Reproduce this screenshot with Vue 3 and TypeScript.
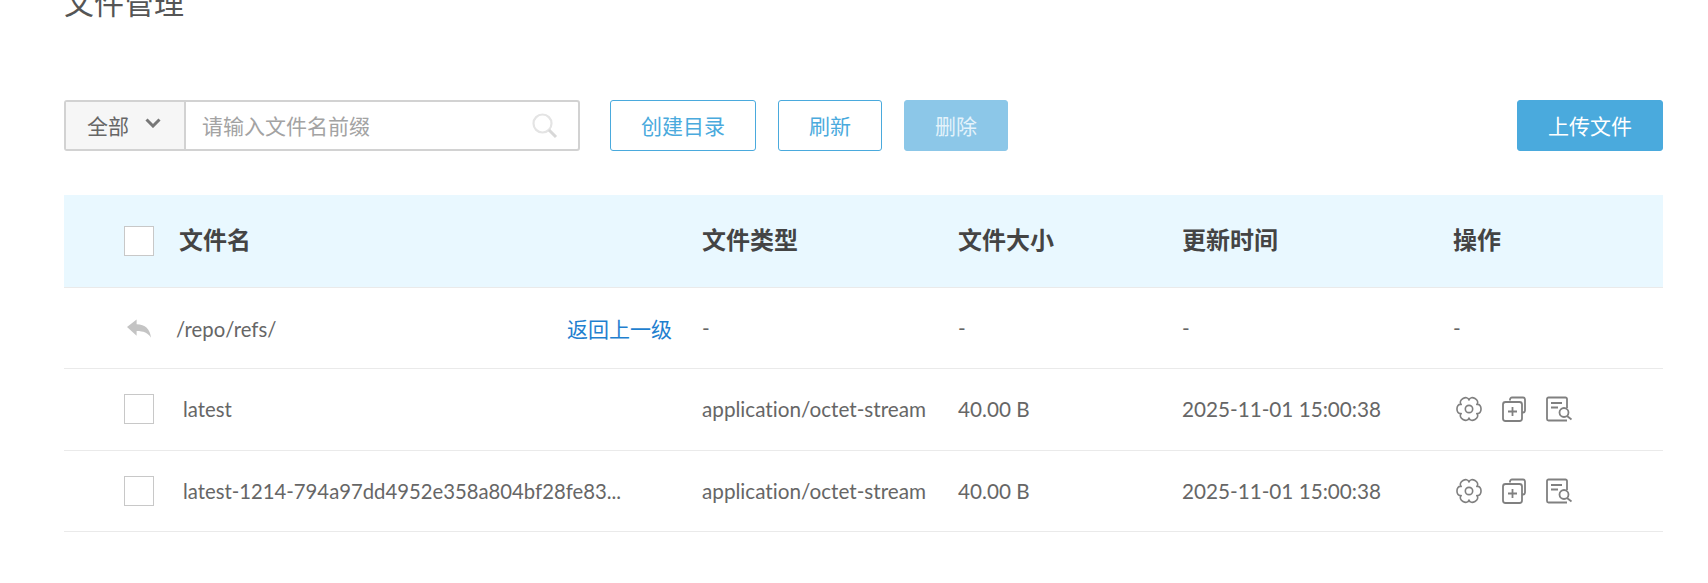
<script setup lang="ts">
interface FileRow { name: string; type: string; size: string; time: string }
const files: FileRow[] = [
  { name: 'latest', type: 'application/octet-stream', size: '40.00 B', time: '2025-11-01 15:00:38' },
  { name: 'latest-1214-794a97dd4952e358a804bf28fe83...', type: 'application/octet-stream', size: '40.00 B', time: '2025-11-01 15:00:38' },
]
const headers = ['文件类型', '文件大小', '更新时间', '操作']
const pt = (deg: number, r: number) => {
  const a = (deg * Math.PI) / 180
  return `${(12 + r * Math.cos(a)).toFixed(2)} ${(12 + r * Math.sin(a)).toFixed(2)}`
}
const gear = (() => {
  let d = `M${pt(-30, 8.3)}`
  for (let k = 0; k < 6; k++) {
    const c = 60 * k
    d += ` C${pt(c - 24, 13.6)} ${pt(c + 24, 13.6)} ${pt(c + 30, 8.3)}`
  }
  return d + 'Z'
})()
</script>

<template>
  <div class="page">
    <h1 class="title">文件管理</h1>
    <div class="toolbar">
      <div class="search">
        <div class="select"><span class="lift">全部</span>
          <svg class="chev" width="16" height="10" viewBox="0 0 16 10"><path d="M1.5 1.500 8 8l6.500-6.500" fill="none" stroke="#777" stroke-width="3" /></svg>
        </div>
        <div class="input"><span class="lift">请输入文件名前缀</span>
          <svg width="26" height="26" viewBox="0 0 26 26"><circle cx="10.500" cy="10.500" r="9" fill="none" stroke="#e4e4e4" stroke-width="2.200" /><path d="M17 17l7 7" stroke="#d8d8d8" stroke-width="3" /></svg>
        </div>
      </div>
      <button class="btn outline wide">创建目录</button>
      <button class="btn outline">刷新</button>
      <button class="btn disabled">删除</button>
      <button class="btn primary wide upload">上传文件</button>
    </div>

    <div class="table">
      <div class="row head">
        <div class="name-cell"><span class="check"></span><span class="head-name">文件名</span></div>
        <div v-for="h in headers" :key="h" class="head-cell">{{ h }}</div>
      </div>
      <div class="row">
        <div class="name-cell">
          <svg class="back" width="25" height="20" viewBox="0 0 26 20"><path d="M0 8 10 0v5c9 0 14 5 15 14-3-5-8-7-15-7v5Z" fill="#c4c4c4" /></svg>
          <span class="path">/repo/refs/</span>
          <a class="link">返回上一级</a>
        </div>
        <div>-</div><div>-</div><div>-</div><div>-</div>
      </div>
      <div v-for="f in files" :key="f.name" class="row">
        <div class="name-cell"><span class="check"></span><span class="file">{{ f.name }}</span></div>
        <div>{{ f.type }}</div>
        <div>{{ f.size }}</div>
        <div>{{ f.time }}</div>
        <div class="ops">
          <svg width="26" height="26" viewBox="0 0 24 24" fill="none" stroke="#808080" stroke-width="1.500"><path :d="gear" stroke-linejoin="round" /><circle cx="12" cy="12" r="3.400" /></svg>
          <svg width="26" height="26" viewBox="0 0 26 26" fill="none" stroke="#808080" stroke-width="1.800"><path d="M9 4.500V3.500a2 2 0 0 1 2-2h11a2 2 0 0 1 2 2v11a2 2 0 0 1-2 2h-1" /><rect x="2" y="6" width="19" height="19" rx="2.500" /><path d="M7 15.500h9M11.500 11v9" /></svg>
          <svg width="27" height="26" viewBox="0 0 27 26" fill="none" stroke="#808080" stroke-width="1.800"><path d="M21 12V3a1.500 1.500 0 0 0-1.500-1.500h-17A1.500 1.500 0 0 0 1 3v20a1.500 1.500 0 0 0 1.500 1.500H21" /><path d="M5 7h11M5 11.500h7" /><circle cx="18" cy="16.500" r="4.500" /><path d="m21 20 4.500 3.500" /></svg>
        </div>
      </div>
    </div>
  </div>
</template>

<style>
html, body { margin: 0; background: #fff; overflow: hidden; }
</style>

<style scoped>
.page {
  padding: 0 45px 0 64px;
  height: 583px;
  box-sizing: border-box;
  overflow: hidden;
  font-family: Lato, "Noto Sans CJK SC", sans-serif;
  font-size: 21px;
  color: #666;
  font-variant-ligatures: none;
}
.title {
  margin: -21px 0 0;
  height: 121px;
  font-size: 30px;
  font-weight: 400;
  line-height: 44px;
  color: #555;
  font-family: "Noto Sans CJK SC", sans-serif;
}
.toolbar { display: flex; align-items: stretch; height: 51px; }
.lift { margin-bottom: 2px; }
.search {
  display: flex;
  width: 516px;
  box-sizing: border-box;
  border: 2px solid #d2d2d2;
  border-radius: 3px;
  margin-right: 30px;
}
.select {
  width: 120px;
  box-sizing: border-box;
  background: #f6f6f6;
  border-right: 2px solid #d2d2d2;
  display: flex;
  align-items: center;
  padding-left: 21px;
  gap: 16px;
  color: #666;
}
.chev { margin-top: -6px; }
.input {
  flex: 1;
  display: flex;
  align-items: center;
  justify-content: space-between;
  padding: 0 20px 0 16px;
  color: #a3a3a3;
}
.btn {
  width: 104px;
  box-sizing: border-box;
  border-radius: 3px;
  font: inherit;
  padding: 0 0 2px;
  margin-right: 22px;
  border: 1.500px solid #4aaadd;
  background: #fff;
  color: #4aaadd;
}
.wide { width: 146px; }
.disabled { background: #8cc7e8; border-color: #8cc7e8; color: #e4f3fb; }
.primary { background: #4aaadd; color: #fff; }
.upload { margin: 0 0 0 auto; }
.table { margin-top: 44px; }
.row {
  display: grid;
  grid-template-columns: 638px 256px 224px 271px 210px;
  height: 81.5px;
  align-items: center;
  border-bottom: 1px solid #eaeaea;
  box-sizing: border-box;
  font-size: 20.7px;
}
.head {
  height: 92.6px;
  background: #e9f8ff;
  font-size: 24px;
  font-weight: 700;
  color: #444;
  font-family: "Noto Sans CJK SC", sans-serif;
}
.head-cell { padding-bottom: 4px; }
.name-cell { display: flex; align-items: center; padding-left: 60px; }
.check {
  width: 30px;
  height: 30px;
  box-sizing: border-box;
  border: 1px solid #c8c8c8;
  background: #fff;
  flex: none;
}
.head-name { margin-left: 25px; margin-bottom: 4px; }
.file { margin-left: 29px; font-size: 20.3px; }
.back { margin: 3px 0 0 3px; flex: none; }
.path { margin: 2px 0 0 24px; font-size: 20.3px; }
.link { margin-left: auto; margin-right: 30px; color: #1f80cf; font-size: 21px; }
.ops { display: flex; align-items: center; gap: 19px; padding-left: 3px; }
</style>
